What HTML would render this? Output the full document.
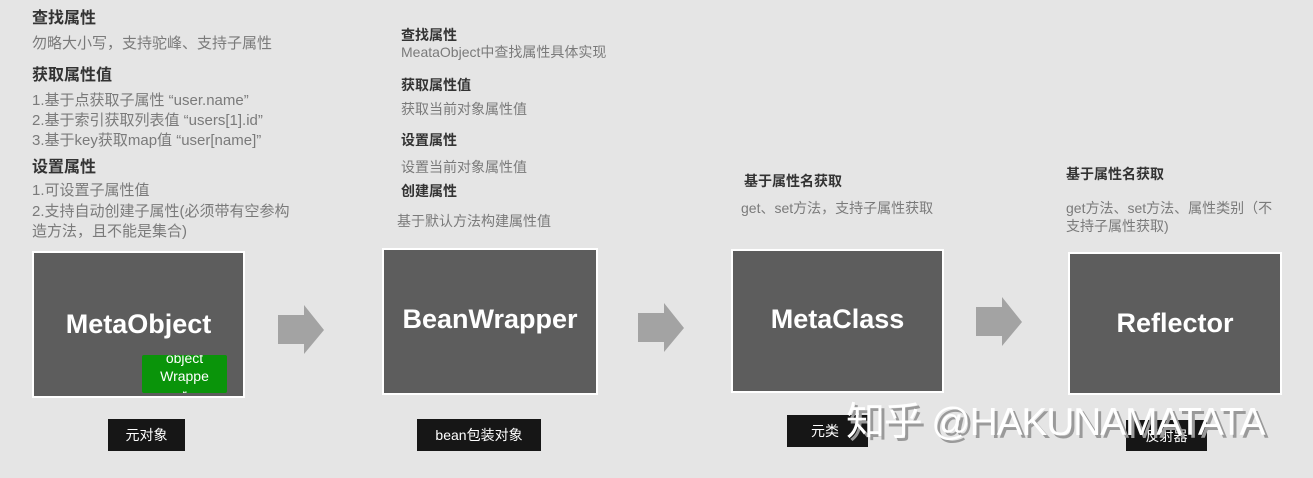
<!DOCTYPE html><html><head><meta charset="utf-8"><style>
body{margin:0;width:1313px;height:478px;background:#e5e5e5;position:relative;overflow:hidden;font-family:"Liberation Sans","Noto Sans CJK SC",sans-serif}
.t{position:absolute;white-space:nowrap;line-height:1}
.h{font-weight:bold;color:#333}
.d{color:#7a7a7a}
.box{position:absolute;background:#5d5d5d;border:2px solid #fff;box-sizing:border-box;color:#fff;font-weight:bold;font-size:27px;display:flex;align-items:center;justify-content:center}
.lab{position:absolute;background:#161616;color:#fff;font-size:14px;display:flex;align-items:center;justify-content:center}
.arr{position:absolute}
</style></head><body>
<div class="t h" style="left:32px;top:11px;font-size:16px">查找属性</div>
<div class="t d" style="left:32px;top:36px;font-size:15px">勿略大小写，支持驼峰、支持子属性</div>
<div class="t h" style="left:32px;top:68px;font-size:16px">获取属性值</div>
<div class="t d" style="left:32px;top:91px;font-size:15px;line-height:20px">1.基于点获取子属性 “user.name”<br>2.基于索引获取列表值 “users[1].id”<br>3.基于key获取map值 “user[name]”</div>
<div class="t h" style="left:32px;top:160px;font-size:16px">设置属性</div>
<div class="t d" style="left:32px;top:181px;font-size:15px;line-height:20.5px">1.可设置子属性值<br>2.支持自动创建子属性(必须带有空参构<br>造方法，且不能是集合)</div>

<div class="t h" style="left:401px;top:28px;font-size:14px">查找属性</div>
<div class="t d" style="left:401px;top:45px;font-size:14px">MeataObject中查找属性具体实现</div>
<div class="t h" style="left:401px;top:78px;font-size:14px">获取属性值</div>
<div class="t d" style="left:401px;top:102px;font-size:14px">获取当前对象属性值</div>
<div class="t h" style="left:401px;top:133px;font-size:14px">设置属性</div>
<div class="t d" style="left:401px;top:160px;font-size:14px">设置当前对象属性值</div>
<div class="t h" style="left:401px;top:184px;font-size:14px">创建属性</div>
<div class="t d" style="left:397px;top:214px;font-size:14px">基于默认方法构建属性值</div>

<div class="t h" style="left:744px;top:174px;font-size:14px">基于属性名获取</div>
<div class="t d" style="left:741px;top:201px;font-size:14px">get、set方法，支持子属性获取</div>
<div class="t h" style="left:1066px;top:167px;font-size:14px">基于属性名获取</div>
<div class="t d" style="left:1066px;top:199px;font-size:14px;line-height:18px">get方法、set方法、属性类别（不<br>支持子属性获取)</div>

<div class="box" style="left:32px;top:251px;width:213px;height:147px">MetaObject</div>
<div style="position:absolute;left:142px;top:355px;width:85px;height:38px;background:#0a940a;color:#fff;font-size:14px;text-align:center;line-height:18px;overflow:hidden;border-radius:2px"><div style="margin-top:-6px">object<br>Wrappe<br>r</div></div>
<div class="box" style="left:382px;top:248px;width:216px;height:147px;padding-bottom:4px">BeanWrapper</div>
<div class="box" style="left:731px;top:249px;width:213px;height:144px;padding-bottom:4px">MetaClass</div>
<div class="box" style="left:1068px;top:252px;width:214px;height:143px">Reflector</div>

<svg class="arr" style="left:278px;top:305px" width="47" height="50"><polygon points="0,10 26,10 26,0 46,25 26,49 26,39 0,39" fill="#a3a3a3"/></svg>
<svg class="arr" style="left:638px;top:303px" width="47" height="50"><polygon points="0,10 26,10 26,0 46,25 26,49 26,39 0,39" fill="#a3a3a3"/></svg>
<svg class="arr" style="left:976px;top:297px" width="47" height="50"><polygon points="0,10 26,10 26,0 46,25 26,49 26,39 0,39" fill="#a3a3a3"/></svg>

<div class="lab" style="left:108px;top:419px;width:77px;height:32px">元对象</div>
<div class="lab" style="left:417px;top:419px;width:124px;height:32px">bean包装对象</div>
<div class="lab" style="left:787px;top:415px;width:81px;height:32px;justify-content:flex-start;padding-left:24px;box-sizing:border-box">元类</div>
<div class="lab" style="left:1126px;top:420px;width:81px;height:31px">反射器</div>
<div class="t" style="left:846px;top:403px;font-size:39px;color:#fff;text-shadow:3px 3px 0 #9a9a9a;letter-spacing:-1.2px">知乎 @HAKUNAMATATA</div>
</body></html>
